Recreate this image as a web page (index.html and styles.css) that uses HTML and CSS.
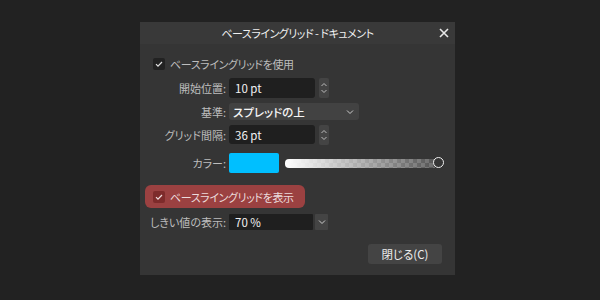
FILE: index.html
```html
<!DOCTYPE html>
<html lang="ja">
<head>
    <meta charset="UTF-8" />
    <title>ベースライングリッド</title>
    <link rel="stylesheet" href="styles.css">
</head>
<body>
    <div class="dialog">
        <div class="titlebar">
            <span class="title">ベースライングリッド - ドキュメント</span>
            <span class="close">
                <svg width="10" height="10" viewBox="0 0 10 10"><path d="M1 1L9 9M9 1L1 9" stroke="#e8e8e8" stroke-width="1.6"/></svg>
            </span>
        </div>
        <div class="content">
            <div class="check-row">
                <span class="checkbox">
                    <svg width="8" height="8" viewBox="0 0 8 8"><path d="M1 4.2L3 6.2L7 2" fill="none" stroke="#e0e0e0" stroke-width="1.2"/></svg>
                </span>
                <span class="check-label">ベースライングリッドを使用</span>
            </div>
            <div class="row row-start">
                <span class="label">開始位置:</span>
                <span class="input">10 pt</span>
                <span class="spinner">
                    <svg width="8" height="16" viewBox="0 0 8 16"><path d="M1.5 6L4 3.5L6.5 6M1.5 10L4 12.5L6.5 10" fill="none" stroke="#bbb" stroke-width="1"/></svg>
                </span>
            </div>
            <div class="row row-base">
                <span class="label">基準:</span>
                <span class="select">スプレッドの上
                    <svg width="8" height="6" viewBox="0 0 8 6"><path d="M1 1.5L4 4.5L7 1.5" fill="none" stroke="#ccc" stroke-width="1"/></svg>
                </span>
            </div>
            <div class="row row-gap">
                <span class="label">グリッド間隔:</span>
                <span class="input">36 pt</span>
                <span class="spinner">
                    <svg width="8" height="16" viewBox="0 0 8 16"><path d="M1.5 6L4 3.5L6.5 6M1.5 10L4 12.5L6.5 10" fill="none" stroke="#bbb" stroke-width="1"/></svg>
                </span>
            </div>
            <div class="row row-color">
                <span class="label">カラー:</span>
                <span class="swatch"></span>
                <span class="slider">
                    <span class="track"></span>
                    <span class="knob"></span>
                </span>
            </div>
            <div class="highlight">
                <span class="checkbox checkbox-red">
                    <svg width="8" height="8" viewBox="0 0 8 8"><path d="M1 4.2L3 6.2L7 2" fill="none" stroke="#f0dede" stroke-width="1.2"/></svg>
                </span>
                <span class="check-label check-label-light">ベースライングリッドを表示</span>
            </div>
            <div class="row row-threshold">
                <span class="label">しきい値の表示:</span>
                <span class="input input-small">70 %</span>
                <span class="dropbtn">
                    <svg width="8" height="6" viewBox="0 0 8 6"><path d="M1 1.5L4 4.5L7 1.5" fill="none" stroke="#ccc" stroke-width="1"/></svg>
                </span>
            </div>
            <div class="footer">
                <span class="button">閉じる(C)</span>
            </div>
        </div>
    </div>
</body>
</html>
```

FILE: styles.css
```css
body {
    margin: 0;
    background-color: #222222;
    font-family: "Noto Sans CJK JP", "Noto Sans", sans-serif;
    font-size: 11px;
    font-feature-settings: "palt";
    color: #c4c4c4;
    width: 600px;
    height: 300px;
    overflow: hidden;
}
.dialog {
    margin: 22px 0 0 140px;
    width: 315px;
    height: 253px;
    background-color: #353535;
}
.titlebar {
    height: 22px;
    background-color: #393939;
    display: flex;
    align-items: center;
    justify-content: center;
    position: relative;
}
.title {
    color: #f0f0f0;
    font-size: 11px;
    letter-spacing: -0.5px;
}
.close {
    position: absolute;
    right: 6px;
    top: 6px;
    width: 10px;
    height: 10px;
    display: flex;
}
.content {
    padding-top: 13px;
}
.check-row {
    display: flex;
    align-items: center;
    height: 14px;
    margin-left: 13px;
}
.checkbox {
    width: 12px;
    height: 12px;
    border-radius: 2px;
    background-color: #222222;
    display: flex;
    align-items: center;
    justify-content: center;
}
.checkbox-red {
    background-color: #7e2b2b;
}
.check-label {
    margin-left: 5px;
    color: #bdbdbd;
    letter-spacing: -0.4px;
    white-space: nowrap;
}
.check-label-light {
    color: #ecdcdc;
}
.row {
    display: flex;
    align-items: center;
}
.label {
    width: 86px;
    text-align: right;
    margin-right: 3px;
    color: #bdbdbd;
    white-space: nowrap;
}
.row-start {
    margin-top: 7px;
    height: 20px;
}
.row-base {
    margin-top: 5px;
    height: 17px;
}
.row-gap {
    margin-top: 5px;
    height: 19px;
}
.row-color {
    margin-top: 9px;
    height: 20px;
}
.row-threshold {
    margin-top: 6px;
    height: 16px;
}
.input {
    width: 80px;
    height: 20px;
    padding-left: 6px;
    border-radius: 3px;
    background-color: #1f1f1f;
    color: #f2f2f2;
    font-size: 11.5px;
    display: flex;
    align-items: center;
}
.row-gap .input {
    height: 19px;
}
.input-small {
    width: 78px;
    height: 16px;
    border-radius: 1px;
}
.spinner {
    margin-left: 4px;
    width: 10px;
    height: 20px;
    border-radius: 2px;
    background-color: #444444;
    display: flex;
    align-items: center;
    justify-content: center;
}
.select {
    width: 121px;
    height: 17px;
    padding-left: 4px;
    padding-right: 5px;
    border-radius: 3px;
    background-color: #424242;
    color: #f4f4f4;
    font-size: 11.5px;
    font-weight: 500;
    display: flex;
    align-items: center;
    justify-content: space-between;
}
.dropbtn {
    margin-left: 2px;
    width: 13px;
    height: 16px;
    border-radius: 1px;
    background-color: #444444;
    display: flex;
    align-items: center;
    justify-content: center;
}
.swatch {
    width: 50px;
    height: 20px;
    border-radius: 2px;
    background-color: #00bfff;
}
.slider {
    margin-left: 6px;
    width: 159px;
    height: 14px;
    display: flex;
    align-items: center;
    position: relative;
}
.track {
    width: 150px;
    height: 9px;
    border-radius: 4px 0 0 4px;
    background-color: #555555;
    background-image:
        linear-gradient(to right, rgba(255, 255, 255, 1), rgba(255, 255, 255, 0.85) 15%, rgba(255, 255, 255, 0)),
        linear-gradient(45deg, #6e6e6e 25%, transparent 25%, transparent 75%, #6e6e6e 75%),
        linear-gradient(45deg, #6e6e6e 25%, transparent 25%, transparent 75%, #6e6e6e 75%);
    background-size: 100% 100%, 8px 8px, 8px 8px;
    background-position: 0 0, 0 0, 4px 4px;
}
.knob {
    position: absolute;
    right: 0;
    top: 1px;
    width: 9px;
    height: 9px;
    border: 1.5px solid #f0f0f0;
    border-radius: 50%;
    background-color: #353535;
}
.highlight {
    margin: 12px 0 0 5px;
    width: 160px;
    height: 23px;
    border-radius: 6px;
    background-color: #9b4141;
    display: flex;
    align-items: center;
    padding-left: 8px;
    box-sizing: border-box;
}
.footer {
    display: flex;
    justify-content: flex-end;
    margin-top: 14px;
    padding-right: 13px;
}
.button {
    width: 74px;
    height: 20px;
    border-radius: 3px;
    background-color: #444444;
    color: #eeeeee;
    font-size: 11.5px;
    display: flex;
    align-items: center;
    justify-content: center;
}
```
